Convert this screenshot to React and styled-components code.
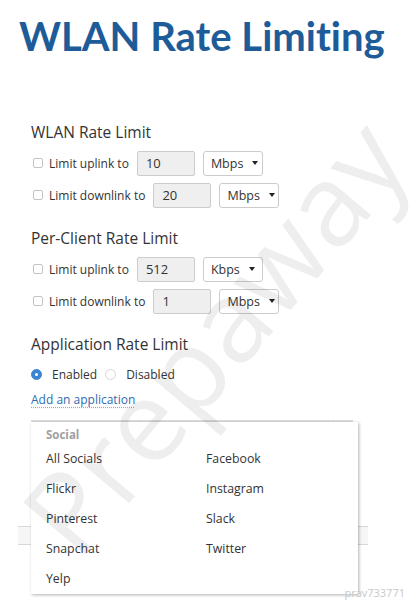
import React from "react";
import styled, { createGlobalStyle } from "styled-components";

const GlobalStyle = createGlobalStyle`
  body {
    margin: 0;
    background: #fff;
    font-family: "Open Sans", "Liberation Sans", sans-serif;
  }
`;

const sections = [
  {
    title: "WLAN Rate Limit",
    rows: [
      { label: "Limit uplink to", value: "10", unit: "Mbps" },
      { label: "Limit downlink to", value: "20", unit: "Mbps" },
    ],
  },
  {
    title: "Per-Client Rate Limit",
    rows: [
      { label: "Limit uplink to", value: "512", unit: "Kbps" },
      { label: "Limit downlink to", value: "1", unit: "Mbps" },
    ],
  },
];

const apps = ["All Socials", "Facebook", "Flickr", "Instagram", "Pinterest", "Slack", "Snapchat", "Twitter", "Yelp"];

export default function App() {
  return (
    <Page>
      <GlobalStyle />
      <Title>WLAN Rate Limiting</Title>
      <Content>
        {sections.map((s) => (
          <Section key={s.title}>
            <SectionTitle>{s.title}</SectionTitle>
            {s.rows.map((r) => (
              <Row key={r.label}>
                <Check />
                <Label>{r.label}</Label>
                <NumInput>{r.value}</NumInput>
                <Select>
                  {r.unit}
                  <Caret />
                </Select>
              </Row>
            ))}
          </Section>
        ))}
        <SectionTitle>Application Rate Limit</SectionTitle>
        <RadioRow>
          <Radio $on />
          <Label>Enabled</Label>
          <Radio />
          <Label>Disabled</Label>
        </RadioRow>
        <Link>Add an application</Link>
        <TableArea>
          <HeaderBar>
            <ColTick style={{ left: 109 }} />
            <ColTick style={{ left: 302 }} />
          </HeaderBar>
          <GrayRow />
          <Dropdown>
            <Group>Social</Group>
            <AppGrid>
              {apps.map((a) => (
                <AppItem key={a}>{a}</AppItem>
              ))}
            </AppGrid>
          </Dropdown>
        </TableArea>
      </Content>
      <Watermark>Prepaway</Watermark>
      <Stamp>prav733771</Stamp>
    </Page>
  );
}

const Page = styled.div`
  position: relative;
  width: 409px;
  height: 600px;
  overflow: hidden;
  color: #333;
`;

const Title = styled.h1`
  margin: 0;
  padding: 12px 0 0 19px;
  font-family: Lato, "Liberation Sans", sans-serif;
  font-weight: 700;
  font-size: 40px;
  line-height: 48px;
  color: #1e5c99;
  font-variant-ligatures: none;
`;

const Content = styled.div`
  padding: 60px 0 0 31px;
`;

const Section = styled.div`
  margin-bottom: 15px;
`;

const SectionTitle = styled.h2`
  margin: 0 0 3px;
  font-size: 15.5px;
  font-weight: 400;
  line-height: 24px;
  color: #333;
`;

const Row = styled.div`
  display: flex;
  align-items: center;
  height: 32px;
`;

const Check = styled.span`
  width: 8px;
  height: 8px;
  margin: 0 6px 0 2px;
  border: 1px solid #c4c4c4;
  border-radius: 2px;
`;

const Label = styled.span`
  font-size: 12px;
  color: #333;
  margin-right: 8px;
`;

const NumInput = styled.div`
  box-sizing: border-box;
  width: 58px;
  height: 25px;
  padding-left: 8px;
  display: flex;
  align-items: center;
  font-size: 13px;
  color: #333;
  background: #efefef;
  border: 1px solid #ccc;
  border-radius: 2px;
`;

const Select = styled.div`
  box-sizing: border-box;
  margin-left: 8px;
  width: 60px;
  height: 25px;
  padding: 0 0 0 7px;
  display: flex;
  align-items: center;
  font-size: 12.5px;
  color: #333;
  background: #fff;
  border: 1px solid #ccc;
  border-radius: 3px;
`;

const Caret = styled.span`
  width: 0;
  height: 0;
  margin-left: 9px;
  border-left: 3.5px solid transparent;
  border-right: 3.5px solid transparent;
  border-top: 4px solid #222;
`;

const RadioRow = styled.div`
  display: flex;
  align-items: center;
  height: 26px;
  margin-top: 5px;
`;

const Radio = styled.span`
  box-sizing: border-box;
  width: 11px;
  height: 11px;
  margin-right: 10px;
  border-radius: 50%;
  background: #fff;
  border: 1px solid ${(p) => (p.$on ? "#3d84d4" : "#d6d6d6")};
  ${(p) => p.$on && "background: #3d84d4;"}
  &::after {
    content: "";
    display: ${(p) => (p.$on ? "block" : "none")};
    width: 3px;
    height: 3px;
    margin: 3px;
    border-radius: 50%;
    background: #fff;
  }
`;

const Link = styled.div`
  margin-top: 3px;
  font-size: 12px;
  line-height: 20px;
  color: #2f6cb0;
  text-decoration: underline dotted #9ab;
  text-underline-offset: 3px;
`;

const TableArea = styled.div`
  position: relative;
  margin: 10px 0 0 -13px;
  width: 350px;
  height: 180px;
`;

const HeaderBar = styled.div`
  position: relative;
  margin-left: 13px;
  width: 322px;
  height: 3px;
  background: #dcdcdc;
`;

const ColTick = styled.span`
  position: absolute;
  top: 0;
  width: 1px;
  height: 8px;
  background: #d0d0d0;
`;

const GrayRow = styled.div`
  margin-top: 103px;
  height: 17px;
  background: #f6f6f6;
  border-top: 1px solid #d8d8d8;
  border-bottom: 1px solid #d8d8d8;
`;

const Dropdown = styled.div`
  position: absolute;
  left: 13px;
  top: 2px;
  width: 327px;
  height: 172px;
  padding: 5px 0 0 15px;
  box-sizing: border-box;
  background: #fff;
  box-shadow: 1px 1px 3px rgba(0, 0, 0, 0.3);
`;

const Group = styled.div`
  font-size: 11.5px;
  font-weight: 700;
  line-height: 16px;
  color: #a0a0a0;
`;

const AppGrid = styled.div`
  display: grid;
  grid-template-columns: 160px 1fr;
  grid-auto-rows: 30px;
`;

const AppItem = styled.div`
  display: flex;
  align-items: center;
  font-size: 12.3px;
  color: #333;
`;

const Watermark = styled.div`
  position: absolute;
  left: 212px;
  top: 335px;
  transform: translate(-50%, -50%) rotate(-50deg);
  font-size: 114px;
  font-weight: 400;
  color: rgba(0, 0, 0, 0.065);
  white-space: nowrap;
  pointer-events: none;
`;

const Stamp = styled.div`
  position: absolute;
  right: 4px;
  bottom: 0;
  font-size: 11px;
  color: #c8c8c8;
  line-height: 14px;
`;
